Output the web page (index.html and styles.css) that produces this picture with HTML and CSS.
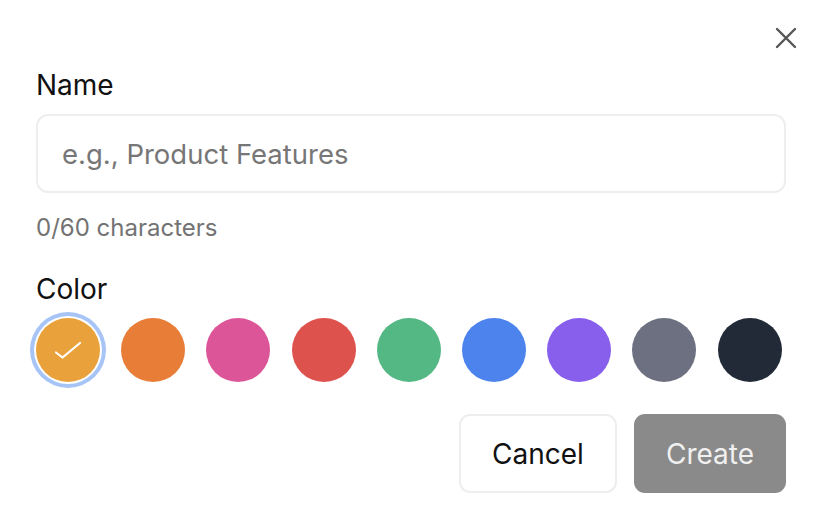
FILE: index.html
```html
<!DOCTYPE html>
<html>
<head>
<meta charset="utf-8">
<link rel="stylesheet" href="styles.css">
</head>
<body>
<div class="dialog">
  <div class="top">
    <button class="close" aria-label="Close">
      <svg width="22" height="22" viewBox="0 0 22 22"><path d="M2 2L20 20M20 2L2 20" stroke="#555" stroke-width="2.4" stroke-linecap="round"/></svg>
    </button>
  </div>
  <label class="label name-label">Name</label>
  <div class="input">e.g., Product Features</div>
  <div class="helper">0/60 characters</div>
  <label class="label color-label">Color</label>
  <div class="swatches">
    <div class="swatch selected" style="background:#E9A23B">
      <svg width="28" height="18" viewBox="0 0 28 18"><path d="M2 11.5L8.5 16.5L26 2" fill="none" stroke="#fff" stroke-width="2.2" stroke-linecap="round" stroke-linejoin="round"/></svg>
    </div>
    <div class="swatch" style="background:#E87D37"></div>
    <div class="swatch" style="background:#DC5598"></div>
    <div class="swatch" style="background:#DE524E"></div>
    <div class="swatch" style="background:#53B883"></div>
    <div class="swatch" style="background:#4D83EC"></div>
    <div class="swatch" style="background:#875FEC"></div>
    <div class="swatch" style="background:#6C7080"></div>
    <div class="swatch" style="background:#222937"></div>
  </div>
  <div class="footer">
    <button class="btn cancel">Cancel</button>
    <button class="btn create">Create</button>
  </div>
</div>
</body>
</html>
```
FILE: styles.css
```css
html, body {
  margin: 0;
  padding: 0;
  background: #fff;
}
body {
  font-family: Inter, "Liberation Sans", sans-serif;
  color: #111;
}
.dialog {
  width: 822px;
  height: 506px;
  box-sizing: border-box;
  padding: 26px 36px 0 36px;
  display: flex;
  flex-direction: column;
}
.top {
  display: flex;
  justify-content: flex-end;
  height: 24px;
  margin-right: -12px;
}
.close {
  border: 0;
  background: none;
  padding: 0;
  width: 24px;
  height: 24px;
  display: flex;
  align-items: center;
  justify-content: center;
  cursor: pointer;
}
.label {
  font-size: 28px;
  line-height: 34px;
  font-weight: 400;
  color: #111;
}
.name-label {
  margin-top: 18px;
}
.input {
  margin-top: 12px;
  height: 79px;
  box-sizing: border-box;
  border: 2px solid #eeeeee;
  border-radius: 12px;
  padding: 0 24px;
  display: flex;
  align-items: center;
  font-size: 27.5px;
  color: #767676;
}
.helper {
  margin-top: 20px;
  font-size: 24px;
  line-height: 30px;
  color: #737373;
}
.color-label {
  margin-top: 29px;
}
.swatches {
  margin-top: 12px;
  display: flex;
  gap: 21.2px;
}
.swatch {
  width: 64px;
  height: 64px;
  border-radius: 50%;
  flex: none;
  display: flex;
  align-items: center;
  justify-content: center;
}
.swatch.selected {
  box-shadow: 0 0 0 2px #fff, 0 0 0 6px #a6c4f6;
}
.footer {
  margin-top: 32px;
  display: flex;
  justify-content: flex-end;
  gap: 17px;
}
.btn {
  height: 79px;
  border-radius: 11px;
  font-family: inherit;
  font-size: 28px;
  padding: 0;
  cursor: pointer;
}
.cancel {
  width: 158px;
  background: #fff;
  border: 2px solid #eeeeee;
  color: #111;
}
.create {
  width: 152px;
  background: #8a8a8a;
  border: 0;
  color: #f0f0f0;
}
```
